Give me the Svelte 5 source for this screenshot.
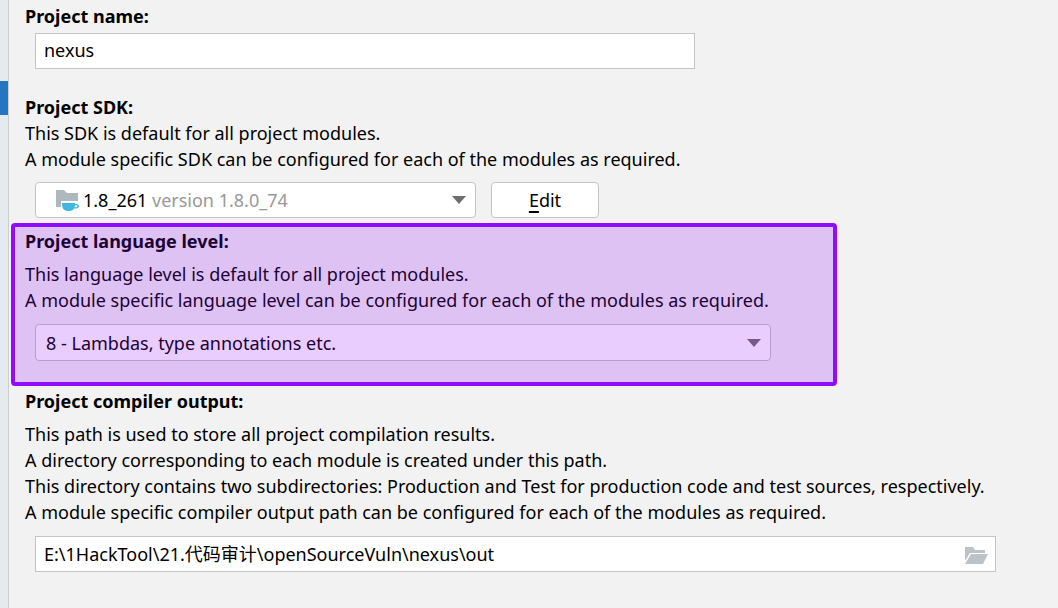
<script>
  let projectName = $state('nexus');
  let output = $state('E:\\1HackTool\\21.代码审计\\openSourceVuln\\nexus\\out');
</script>

<div class="window">
  <aside><div class="selected"></div></aside>
  <main>
    <section>
      <h2><label for="name">Project name:</label></h2>
      <div class="controls"><input id="name" class="name" type="text" bind:value={projectName} /></div>
    </section>

    <section class="sdk">
      <h2><label for="sdk">Project SDK:</label></h2>
      <p>This SDK is default for all project modules.</p>
      <p>A module specific SDK can be configured for each of the modules as required.</p>
      <div class="controls sdk-controls">
        <div class="combo sdk-combo">
          <select id="sdk"><option>1.8_261 version 1.8.0_74</option></select>
          <div class="value" aria-hidden="true">
            <svg width="24" height="22" viewBox="0 0 24 22">
              <path d="M1 1h8l3 3h11v8H6v6H1z" fill="#afb8be" />
              <path d="M7 14h13v1h1.500c3.300 0 3.300 4.500 0 4.500H19C18 21.300 16.500 22 14.500 22h-2C9 22 7 19 7 15z" fill="#40b6e0" />
              <path d="M20 16.200h1.300c1.400 0 1.400 2 0 2H19.700z" fill="#fff" />
            </svg>
            <span>1.8_261 <span class="version">version 1.8.0_74</span></span>
          </div>
          <svg class="arrow" width="14" height="8" viewBox="0 0 14 8"><path d="M0 0h14L7 8z" fill="#6e6e6e" /></svg>
        </div>
        <button class="edit" type="button"><span class="key">E</span>dit</button>
      </div>
    </section>

    <section class="language">
      <h2><label for="level">Project language level:</label></h2>
      <div class="description">
        <p>This language level is default for all project modules.</p>
        <p>A module specific language level can be configured for each of the modules as required.</p>
      </div>
      <div class="controls spaced">
        <div class="combo level-combo">
          <select id="level"><option>8 - Lambdas, type annotations etc.</option></select>
          <svg class="arrow" width="14" height="8" viewBox="0 0 14 8"><path d="M0 0h14L7 8z" fill="#6e6e6e" /></svg>
        </div>
      </div>
    </section>

    <section class="compiler">
      <h2><label for="output">Project compiler output:</label></h2>
      <div class="description">
        <p>This path is used to store all project compilation results.</p>
        <p>A directory corresponding to each module is created under this path.</p>
        <p>This directory contains two subdirectories: Production and Test for production code and test sources, respectively.</p>
        <p>A module specific compiler output path can be configured for each of the modules as required.</p>
      </div>
      <div class="controls spaced">
        <div class="path">
          <input id="output" type="text" bind:value={output} />
          <button class="browse" type="button" aria-label="Browse">
            <svg width="24" height="18" viewBox="0 0 24 18">
              <path d="M1 1h8l2 3h10v3H6L1 15z" fill="#bcc3c7" />
              <path d="M7 8h17l-5 10H1z" fill="#bcc3c7" />
            </svg>
          </button>
        </div>
      </div>
    </section>
  </main>
</div>

<style>
  :global(body) {
    background: #f2f2f2;
  }
  .window {
    display: flex;
    min-height: 100vh;
    color: #000;
    font: 18px/26px "Noto Sans", "Noto Sans CJK SC", sans-serif;
  }
  aside {
    box-sizing: border-box;
    flex: none;
    width: 9px;
    padding-top: 81px;
    background: #e5eaee;
    border-right: 1px solid #cecece;
  }
  .selected {
    height: 34px;
    background: #2675bf;
  }
  main {
    flex: 1;
    min-width: 0;
    padding: 3px 16px 16px;
  }
  h2, p {
    margin: 0;
    font-size: inherit;
    white-space: nowrap;
  }
  h2 {
    font-weight: 700;
  }
  .controls {
    display: flex;
    gap: 15px;
    padding: 4px 0 0 10px;
  }
  .controls.sdk-controls {
    padding-top: 10px;
  }
  .controls.spaced {
    padding-top: 11px;
  }
  input, select, button {
    box-sizing: border-box;
    margin: 0;
    font: inherit;
    color: inherit;
    outline: none;
  }
  .name, .path, .combo, .edit {
    box-sizing: border-box;
    height: 36px;
    background: #fff;
    border: 1px solid #c4c4c4;
  }
  .name {
    width: 660px;
    max-width: 100%;
    padding: 0 8px 2px;
  }
  .sdk {
    margin-top: 25px;
  }
  .combo {
    position: relative;
    border-radius: 4px;
  }
  .combo select {
    display: block;
    width: 100%;
    height: 100%;
    padding: 0 40px 0 10px;
    border: 0;
    background: transparent;
    appearance: none;
  }
  .sdk-combo {
    width: 441px;
  }
  .sdk-combo select {
    color: transparent;
  }
  .sdk-combo option {
    color: #000;
  }
  .value {
    position: absolute;
    inset: 0;
    display: flex;
    align-items: center;
    gap: 4px;
    padding-left: 19px;
    white-space: nowrap;
    pointer-events: none;
  }
  .version {
    color: #999;
  }
  .arrow {
    position: absolute;
    top: 50%;
    right: 9px;
    margin-top: -4px;
    pointer-events: none;
  }
  .edit {
    width: 108px;
    padding: 0;
    border-radius: 4px;
  }
  .key {
    text-decoration: underline 2px;
    text-underline-offset: 4px;
  }
  .language {
    position: relative;
    width: 798px;
    margin-top: 5px;
    padding: 5px 0 25px;
  }
  .language::after {
    content: "";
    position: absolute;
    inset: 0 -14px;
    background: rgba(145, 5, 255, 0.2);
    border: 4px solid #8f0cff;
    border-radius: 4px;
    background-clip: padding-box;
    box-sizing: border-box;
    pointer-events: none;
  }
  .description {
    padding-top: 7px;
  }
  .level-combo {
    width: 736px;
    height: 37px;
  }
  .compiler {
    margin-top: 2px;
  }
  .path {
    display: flex;
    flex: 1;
    max-width: 961px;
    margin-right: 36px;
  }
  .path input {
    flex: 1;
    min-width: 0;
    padding: 0 8px;
    border: 0;
    background: transparent;
  }
  .browse {
    display: flex;
    align-items: center;
    padding: 2px 7px 0;
    border: 0;
    background: transparent;
  }
</style>
